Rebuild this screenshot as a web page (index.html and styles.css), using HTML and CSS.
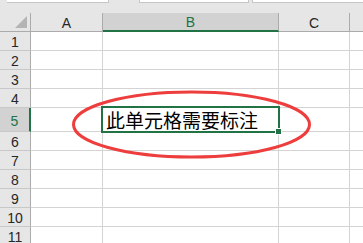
FILE: index.html
```html
<!DOCTYPE html>
<html>
<head>
<meta charset="utf-8">
<link rel="stylesheet" href="styles.css">
</head>
<body>
<div class="page">
  <div class="topbar">
    <div class="tb tb1"></div>
    <div class="tb tb2"></div>
    <div class="tb tb3"></div>
  </div>
  <div class="sheet">
    <div class="hd corner"><span class="tri"></span></div>
    <div class="hd col">A</div>
    <div class="hd col sel">B</div>
    <div class="hd col">C</div>
    <div class="hd col last"></div>

    <div class="rh">1</div><div class="c"></div><div class="c"></div><div class="c"></div><div class="c last"></div>
    <div class="rh">2</div><div class="c"></div><div class="c"></div><div class="c"></div><div class="c last"></div>
    <div class="rh">3</div><div class="c"></div><div class="c"></div><div class="c"></div><div class="c last"></div>
    <div class="rh">4</div><div class="c"></div><div class="c"></div><div class="c"></div><div class="c last"></div>
    <div class="rh sel">5</div><div class="c"></div><div class="c active"><span class="txt">此单元格需要标注</span><span class="handle"></span></div><div class="c"></div><div class="c last"></div>
    <div class="rh">6</div><div class="c"></div><div class="c"></div><div class="c"></div><div class="c last"></div>
    <div class="rh">7</div><div class="c"></div><div class="c"></div><div class="c"></div><div class="c last"></div>
    <div class="rh">8</div><div class="c"></div><div class="c"></div><div class="c"></div><div class="c last"></div>
    <div class="rh">9</div><div class="c"></div><div class="c"></div><div class="c"></div><div class="c last"></div>
    <div class="rh">10</div><div class="c"></div><div class="c"></div><div class="c"></div><div class="c last"></div>
    <div class="rh">11</div><div class="c"></div><div class="c"></div><div class="c"></div><div class="c last"></div>
  </div>
  <svg class="mark" width="363" height="243" viewBox="0 0 363 243">
    <ellipse cx="191.5" cy="124.5" rx="118" ry="32.5" fill="none" stroke="#ee3d3d" stroke-width="3"/>
  </svg>
</div>
</body>
</html>
```
FILE: styles.css
```css
html, body {
  margin: 0;
  padding: 0;
  background: #ffffff;
}
.page {
  position: relative;
  width: 363px;
  height: 243px;
  overflow: hidden;
  font-family: "Liberation Sans", Arial, sans-serif;
}
.topbar {
  height: 13px;
  background: #e6e6e6;
  position: relative;
  display: flex;
  align-items: flex-start;
}
.tb {
  height: 2px;
  background: #ffffff;
  border-bottom: 1px solid #c6c6c6;
}
.tb1 {
  margin-left: 7px;
  width: 101px;
  border-right: 1px solid #c6c6c6;
}
.tb2 {
  margin-left: 30px;
  width: 108px;
  border-left: 1px solid #c6c6c6;
  border-right: 1px solid #c6c6c6;
}
.tb3 {
  margin-left: 3px;
  flex: 1;
  border-left: 1px solid #c6c6c6;
}
.sheet {
  display: grid;
  grid-template-columns: 31px 72px 176px 71px 1fr;
  grid-template-rows: 19px 19px 19px 19px 19px 24px 19px 19px 19px 19px 19px 19px;
}
.hd {
  box-sizing: border-box;
  background: #e6e6e6;
  border-right: 1px solid #ababab;
  border-bottom: 1px solid #ababab;
  font-size: 14px;
  color: #262626;
  display: flex;
  align-items: center;
  justify-content: center;
  line-height: 1;
  padding-top: 1px;
}
.hd.last { border-right: none; }
.hd.sel {
  background: #d2d2d2;
  color: #217346;
  border-bottom: 2px solid #217346;
}
.corner {
  position: relative;
}
.tri {
  position: absolute;
  left: 15px;
  top: 3px;
  width: 0;
  height: 0;
  border-left: 12px solid transparent;
  border-bottom: 12px solid #b4b4b4;
}
.rh {
  box-sizing: border-box;
  background: #e6e6e6;
  border-right: 1px solid #ababab;
  border-bottom: 1px solid #c8c8c8;
  font-size: 14px;
  color: #262626;
  display: flex;
  align-items: center;
  justify-content: center;
  line-height: 1;
  padding-top: 2px;
}
.rh.sel {
  background: #d2d2d2;
  color: #217346;
  border-right: 2px solid #217346;
}
.c {
  box-sizing: border-box;
  border-right: 1px solid #d4d4d4;
  border-bottom: 1px solid #d4d4d4;
}
.c.last { border-right: none; }
.active {
  position: relative;
}
.active::after {
  content: "";
  position: absolute;
  left: -2px;
  top: -2px;
  right: -2px;
  bottom: -2px;
  border: 2px solid #217346;
}
.txt {
  position: absolute;
  left: 3px;
  bottom: 0px;
  font-family: "Noto Sans CJK SC", sans-serif;
  font-size: 19px;
  line-height: 22px;
  color: #000000;
  white-space: nowrap;
}
.handle {
  position: absolute;
  right: -4px;
  bottom: -4px;
  width: 5px;
  height: 5px;
  background: #217346;
  border: 1px solid #ffffff;
  z-index: 2;
}
.mark {
  position: absolute;
  left: 0;
  top: 0;
  pointer-events: none;
}
```
